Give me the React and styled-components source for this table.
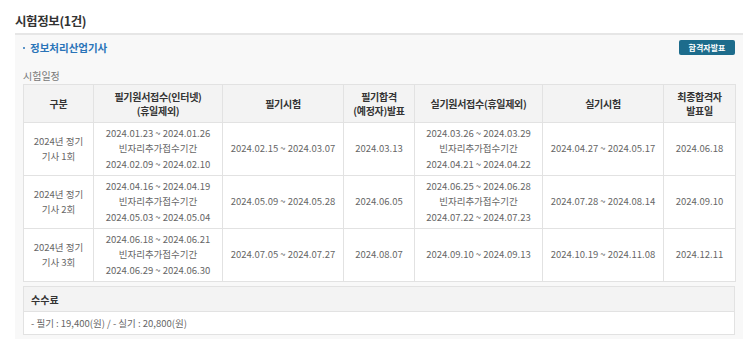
import React from "react";
import styled, { createGlobalStyle } from "styled-components";

const Global = createGlobalStyle`
  html, body { margin: 0; padding: 0; background: #fff; }
  body { font-family: "Noto Sans CJK KR", "Noto Sans", sans-serif; color: #333; }
`;

const Page = styled.div`
  padding-left: 15px;
  width: 728px;
`;

const Title = styled.h2`
  margin: 0;
  height: 33px;
  display: flex;
  align-items: center;
  padding-top: 7px;
  box-sizing: border-box;
  font-size: 12.5px;
  font-weight: 700;
  color: #333;
  letter-spacing: -0.4px;
`;

const Panel = styled.section`
  background: #f8f8f8;
  border-top: 2px solid #e6e6e6;
  padding: 5px 8px 4px 8px;
`;

const SubjectRow = styled.div`
  display: flex;
  align-items: center;
  justify-content: space-between;
  height: 15px;
`;

const Subject = styled.div`
  font-size: 10.5px;
  font-weight: 700;
  color: #2a74b8;
  display: flex;
  align-items: center;
  gap: 5px;
  &::before {
    content: "";
    width: 2px;
    height: 2px;
    background: #2a74b8;
    border-radius: 1px;
  }
`;

const PassButton = styled.button`
  width: 56px;
  height: 15px;
  border: none;
  border-radius: 2px;
  background: #1d6c8c;
  color: #fff;
  font-family: inherit;
  font-size: 8px;
  font-weight: 700;
  padding: 0;
  line-height: 15px;
`;

const SectionLabel = styled.div`
  margin-top: 14px;
  height: 14px;
  font-size: 10px;
  color: #777;
  line-height: 14px;
`;

const Table = styled.table`
  width: 712px;
  border-collapse: collapse;
  table-layout: fixed;
  background: #fff;
  margin-top: 1px;
`;

const Th = styled.th`
  background: #f3f3f3;
  border: 1px solid #e2e2e2;
  height: 37px;
  font-size: 10px;
  font-weight: 700;
  color: #333;
  line-height: 14px;
  padding: 0;
  letter-spacing: -0.3px;
`;

const HeadLine = styled.span`
  display: block;
`;

const Td = styled.td`
  border: 1px solid #e2e2e2;
  height: 52px;
  font-size: 9.5px;
  color: #666;
  text-align: center;
  line-height: 15.5px;
  padding: 0;
`;

const FeeBox = styled.div`
  margin-top: 4px;
  border: 1px solid #e2e2e2;
  background: #fff;
`;

const FeeHead = styled.div`
  background: #f3f3f3;
  height: 24px;
  border-bottom: 1px solid #e2e2e2;
  display: flex;
  align-items: center;
  padding-left: 7px;
  font-size: 10px;
  font-weight: 700;
  color: #333;
`;

const FeeBody = styled.div`
  height: 22px;
  display: flex;
  align-items: center;
  padding-left: 7px;
  font-size: 9.5px;
  color: #666;
`;

const widths = [70, 129, 121, 71, 128, 121, 72];

const headers = [
  ["구분"],
  ["필기원서접수(인터넷)", "(휴일제외)"],
  ["필기시험"],
  ["필기합격", "(예정자)발표"],
  ["실기원서접수(휴일제외)"],
  ["실기시험"],
  ["최종합격자", "발표일"],
];

const rows = [
  [
    ["2024년 정기", "기사 1회"],
    ["2024.01.23 ~ 2024.01.26", "빈자리추가접수기간", "2024.02.09 ~ 2024.02.10"],
    ["2024.02.15 ~ 2024.03.07"],
    ["2024.03.13"],
    ["2024.03.26 ~ 2024.03.29", "빈자리추가접수기간", "2024.04.21 ~ 2024.04.22"],
    ["2024.04.27 ~ 2024.05.17"],
    ["2024.06.18"],
  ],
  [
    ["2024년 정기", "기사 2회"],
    ["2024.04.16 ~ 2024.04.19", "빈자리추가접수기간", "2024.05.03 ~ 2024.05.04"],
    ["2024.05.09 ~ 2024.05.28"],
    ["2024.06.05"],
    ["2024.06.25 ~ 2024.06.28", "빈자리추가접수기간", "2024.07.22 ~ 2024.07.23"],
    ["2024.07.28 ~ 2024.08.14"],
    ["2024.09.10"],
  ],
  [
    ["2024년 정기", "기사 3회"],
    ["2024.06.18 ~ 2024.06.21", "빈자리추가접수기간", "2024.06.29 ~ 2024.06.30"],
    ["2024.07.05 ~ 2024.07.27"],
    ["2024.08.07"],
    ["2024.09.10 ~ 2024.09.13"],
    ["2024.10.19 ~ 2024.11.08"],
    ["2024.12.11"],
  ],
];

const Lines = ({ lines }) =>
  lines.map((l, i) => (
    <React.Fragment key={i}>
      {i > 0 && <br />}
      {l}
    </React.Fragment>
  ));

export default function App() {
  return (
    <>
      <Global />
      <Page>
        <Title>시험정보(1건)</Title>
        <Panel>
          <SubjectRow>
            <Subject>정보처리산업기사</Subject>
            <PassButton>합격자발표</PassButton>
          </SubjectRow>
          <SectionLabel>시험일정</SectionLabel>
          <Table>
            <colgroup>
              {widths.map((w, i) => (
                <col key={i} style={{ width: w }} />
              ))}
            </colgroup>
            <thead>
              <tr>
                {headers.map((h, i) => (
                  <Th key={i}>
                    {h.map((l, li) => (
                      <HeadLine key={li}>{l}</HeadLine>
                    ))}
                  </Th>
                ))}
              </tr>
            </thead>
            <tbody>
              {rows.map((r, ri) => (
                <tr key={ri}>
                  {r.map((c, ci) => (
                    <Td key={ci}>
                      <Lines lines={c} />
                    </Td>
                  ))}
                </tr>
              ))}
            </tbody>
          </Table>
          <FeeBox>
            <FeeHead>수수료</FeeHead>
            <FeeBody>- 필기 : 19,400(원) / - 실기 : 20,800(원)</FeeBody>
          </FeeBox>
        </Panel>
      </Page>
    </>
  );
}
